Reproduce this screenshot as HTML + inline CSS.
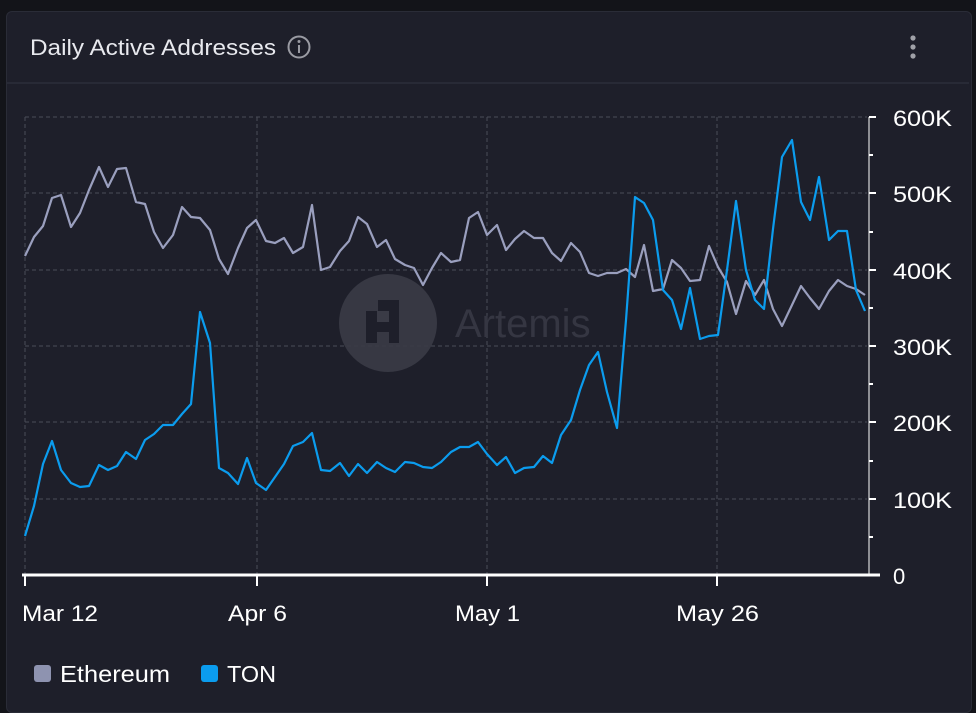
<!DOCTYPE html>
<html><head><meta charset="utf-8"><style>
html,body{margin:0;padding:0;background:#131419;width:976px;height:692px;overflow:hidden;font-family:"Liberation Sans",sans-serif;}
.card{position:absolute;left:6px;top:11px;width:964px;height:700px;background:#1e1f2a;border:1px solid #2a2c37;border-radius:6px;}
</style></head><body>
<div class="card"></div>
<svg width="976" height="692" style="position:absolute;left:0;top:0" font-family="Liberation Sans, sans-serif">
<line x1="7" y1="83" x2="969" y2="83" stroke="#2c2e3a" stroke-width="1.5"/>
<text x="30" y="55" fill="#e8e9ee" font-size="22" textLength="246" lengthAdjust="spacingAndGlyphs">Daily Active Addresses</text>
<circle cx="299" cy="47" r="10.5" fill="none" stroke="#9a9ba3" stroke-width="2"/>
<circle cx="299" cy="41.5" r="1.5" fill="#9a9ba3"/>
<line x1="299" y1="45" x2="299" y2="53" stroke="#9a9ba3" stroke-width="2"/>
<circle cx="913" cy="38" r="2.6" fill="#a0a1a8"/><circle cx="913" cy="47" r="2.6" fill="#a0a1a8"/><circle cx="913" cy="56" r="2.6" fill="#a0a1a8"/>
<g stroke="#4a4c58" stroke-width="1" stroke-dasharray="4,3">
<line x1="25" y1="117" x2="867" y2="117"/><line x1="25" y1="193" x2="867" y2="193"/><line x1="25" y1="270" x2="867" y2="270"/><line x1="25" y1="346" x2="867" y2="346"/><line x1="25" y1="422" x2="867" y2="422"/><line x1="25" y1="499" x2="867" y2="499"/>
<line x1="25" y1="117" x2="25" y2="575"/><line x1="257" y1="117" x2="257" y2="575"/><line x1="487" y1="117" x2="487" y2="575"/><line x1="717" y1="117" x2="717" y2="575"/>
</g>
<g stroke="#ffffff" stroke-width="2">
<line x1="869" y1="117" x2="869" y2="575" stroke-width="1"/>
<line x1="869" y1="117" x2="876" y2="117"/><line x1="869" y1="193" x2="876" y2="193"/><line x1="869" y1="270" x2="876" y2="270"/><line x1="869" y1="346" x2="876" y2="346"/><line x1="869" y1="422" x2="876" y2="422"/><line x1="869" y1="499" x2="876" y2="499"/>
<line x1="869" y1="155" x2="873" y2="155"/><line x1="869" y1="232" x2="873" y2="232"/><line x1="869" y1="308" x2="873" y2="308"/><line x1="869" y1="384" x2="873" y2="384"/><line x1="869" y1="461" x2="873" y2="461"/><line x1="869" y1="537" x2="873" y2="537"/>
<line x1="22" y1="575" x2="880" y2="575" stroke-width="3"/>
<line x1="25" y1="575" x2="25" y2="586"/><line x1="257" y1="575" x2="257" y2="586"/><line x1="487" y1="575" x2="487" y2="586"/><line x1="717" y1="575" x2="717" y2="586"/>
</g>
<g fill="#ffffff" font-size="22" lengthAdjust="spacingAndGlyphs">
<text x="893" y="126" textLength="59" lengthAdjust="spacingAndGlyphs">600K</text><text x="893" y="202" textLength="59" lengthAdjust="spacingAndGlyphs">500K</text><text x="893" y="279" textLength="59" lengthAdjust="spacingAndGlyphs">400K</text><text x="893" y="355" textLength="59" lengthAdjust="spacingAndGlyphs">300K</text><text x="893" y="431" textLength="59" lengthAdjust="spacingAndGlyphs">200K</text><text x="893" y="508" textLength="59" lengthAdjust="spacingAndGlyphs">100K</text><text x="893" y="584">0</text>
<text x="22" y="621" textLength="76" lengthAdjust="spacingAndGlyphs">Mar 12</text><text x="228" y="621" textLength="59" lengthAdjust="spacingAndGlyphs">Apr 6</text><text x="455" y="621" textLength="65" lengthAdjust="spacingAndGlyphs">May 1</text><text x="676" y="621" textLength="83" lengthAdjust="spacingAndGlyphs">May 26</text>
</g>
<circle cx="388" cy="323" r="49" fill="#3a3b46" opacity="0.9"/>
<path d="M366 343h11v-11h12v11h10v-43h-21v11h-12z" fill="#1e1f2a"/>
<path d="M377 311h12v11h-12z" fill="#3a3b46"/>
<text x="455" y="337" fill="#353642" font-size="40">Artemis</text>
<polyline fill="none" stroke="#9a9fbe" stroke-width="2.2" stroke-linejoin="round" points="25,256 34,237 43,226 52,198 61,195 71,227 80,213 89,190 99,167 108,187 117,169 126,168 136,202 145,204 154,232 163,248 173,235 182,207 191,217 200,218 210,230 219,259 228,274 238,248 247,228 256,220 266,241 275,243 284,238 293,253 303,247 312,205 321,270 330,267 340,251 349,241 358,217 367,224 377,247 386,240 395,259 405,265 414,268 423,285 432,268 441,253 451,262 460,260 469,218 478,212 487,235 497,225 506,250 515,239 524,231 534,238 543,238 552,253 561,261 571,243 580,252 589,273 598,276 607,273 617,273 626,269 635,277 644,245 653,291 663,289 672,260 681,268 690,281 700,280 709,246 718,267 727,282 736,314 746,281 755,295 764,280 773,309 782,326 792,305 801,286 810,298 819,309 829,291 838,280 847,286 856,289 865,295"/>
<polyline fill="none" stroke="#0b9cee" stroke-width="2.2" stroke-linejoin="round" points="25,536 34,506 43,464 52,441 61,470 71,483 80,487 89,486 99,465 108,470 117,466 126,452 136,459 145,440 154,434 163,425 173,425 182,414 191,404 200,312 210,343 219,468 228,473 238,484 247,458 256,483 266,490 275,477 284,464 293,446 303,442 312,433 321,470 330,471 340,463 349,476 358,464 367,473 377,462 386,468 395,472 405,462 414,463 423,467 432,468 441,462 451,452 460,447 469,447 478,442 487,454 497,465 506,457 515,473 524,468 534,467 543,456 552,463 561,435 571,420 580,390 589,365 598,352 607,392 617,428 626,320 635,197 644,203 653,220 663,290 672,300 681,329 690,288 700,339 709,336 718,335 727,270 736,201 746,270 755,300 764,309 773,229 782,157 792,140 801,202 810,220 819,177 829,240 838,231 847,231 856,290 865,311"/>
<rect x="34" y="665" width="17" height="17" rx="3" fill="#8e93b0"/>
<text x="60" y="682" fill="#ffffff" font-size="23" textLength="110" lengthAdjust="spacingAndGlyphs">Ethereum</text>
<rect x="201" y="665" width="17" height="17" rx="3" fill="#0b9cee"/>
<text x="227" y="682" fill="#ffffff" font-size="23" textLength="49" lengthAdjust="spacingAndGlyphs">TON</text>
</svg>
</body></html>
